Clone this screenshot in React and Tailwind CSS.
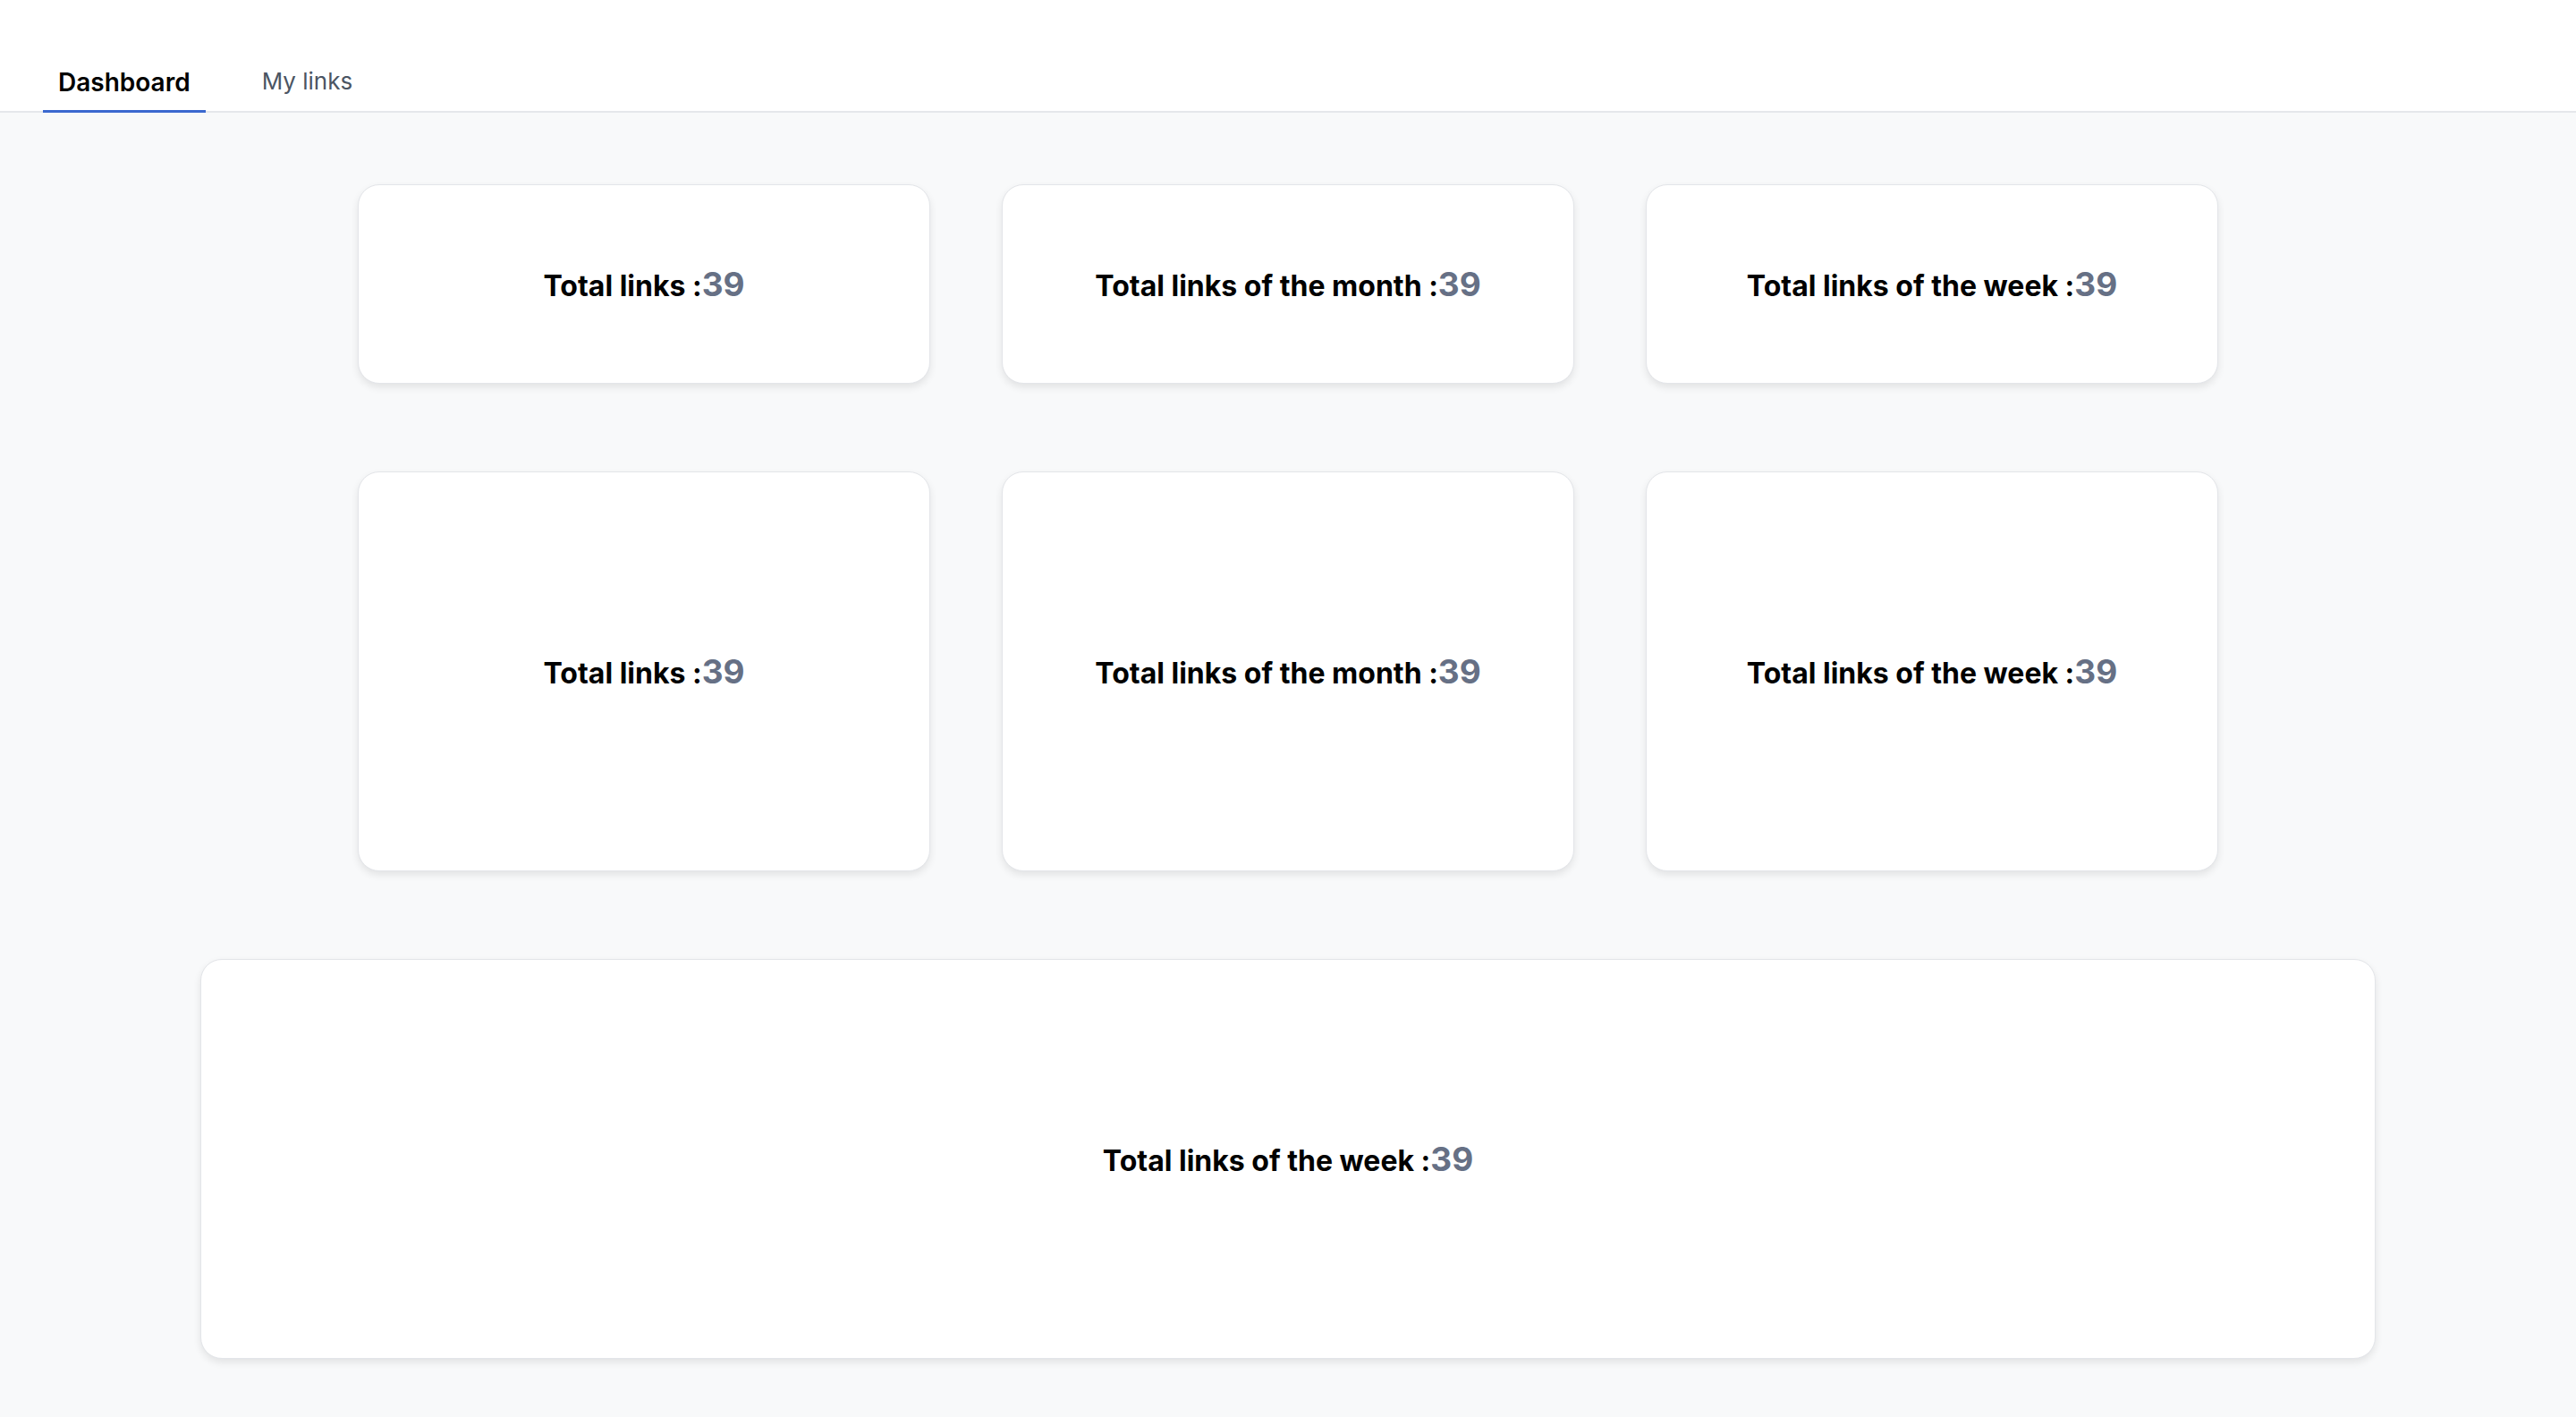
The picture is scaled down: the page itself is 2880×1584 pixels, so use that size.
import React, { useState } from 'react';

const stats = [
  { label: 'Total links', value: 39 },
  { label: 'Total links of the month', value: 39 },
  { label: 'Total links of the week', value: 39 },
];

const StatCard = ({ label, value, className }) => (
  <div
    className={`flex items-center justify-center bg-white rounded-[24px] border border-[#e3e5e9] shadow-[0_4px_8px_rgba(0,0,0,0.09)] ${className}`}
  >
    <p className="text-[32px] font-bold text-black leading-none">
      {label} :<span className="text-[37px] font-bold text-[#667085]">{value}</span>
    </p>
  </div>
);

const App = () => {
  const [tab, setTab] = useState('dashboard');

  return (
    <div className="min-h-screen bg-[#f8f9fa] font-['Inter','Liberation_Sans',sans-serif]">
      <header className="h-[126px] bg-white border-b-2 border-[#e5e7eb] flex items-end px-[48px] gap-[46px]">
        <button
          onClick={() => setTab('dashboard')}
          className={`px-[17px] pb-[10px] -mb-[2px] text-[28px] border-b-[3px] ${
            tab === 'dashboard'
              ? 'font-semibold text-black border-[#3b68cf]'
              : 'text-[#4b5563] border-transparent'
          }`}
        >
          Dashboard
        </button>
        <button
          onClick={() => setTab('links')}
          className={`px-[17px] pb-[13px] -mb-[2px] text-[26px] border-b-[3px] ${
            tab === 'links'
              ? 'font-semibold text-black border-[#3b68cf]'
              : 'text-[#4b5563] border-transparent'
          }`}
        >
          My links
        </button>
      </header>

      <main className="flex flex-col items-center pt-[80px] pb-[66px]">
        <div className="grid grid-cols-[640px_640px_640px] gap-x-[80px]">
          {stats.map((s) => (
            <StatCard key={s.label} {...s} className="h-[223px]" />
          ))}
        </div>
        <div className="grid grid-cols-[640px_640px_640px] gap-x-[80px] mt-[98px]">
          {stats.map((s) => (
            <StatCard key={s.label} {...s} className="h-[447px]" />
          ))}
        </div>
        <StatCard
          label="Total links of the week"
          value={39}
          className="w-[2432px] h-[447px] mt-[98px]"
        />
      </main>
    </div>
  );
};

export default App;
